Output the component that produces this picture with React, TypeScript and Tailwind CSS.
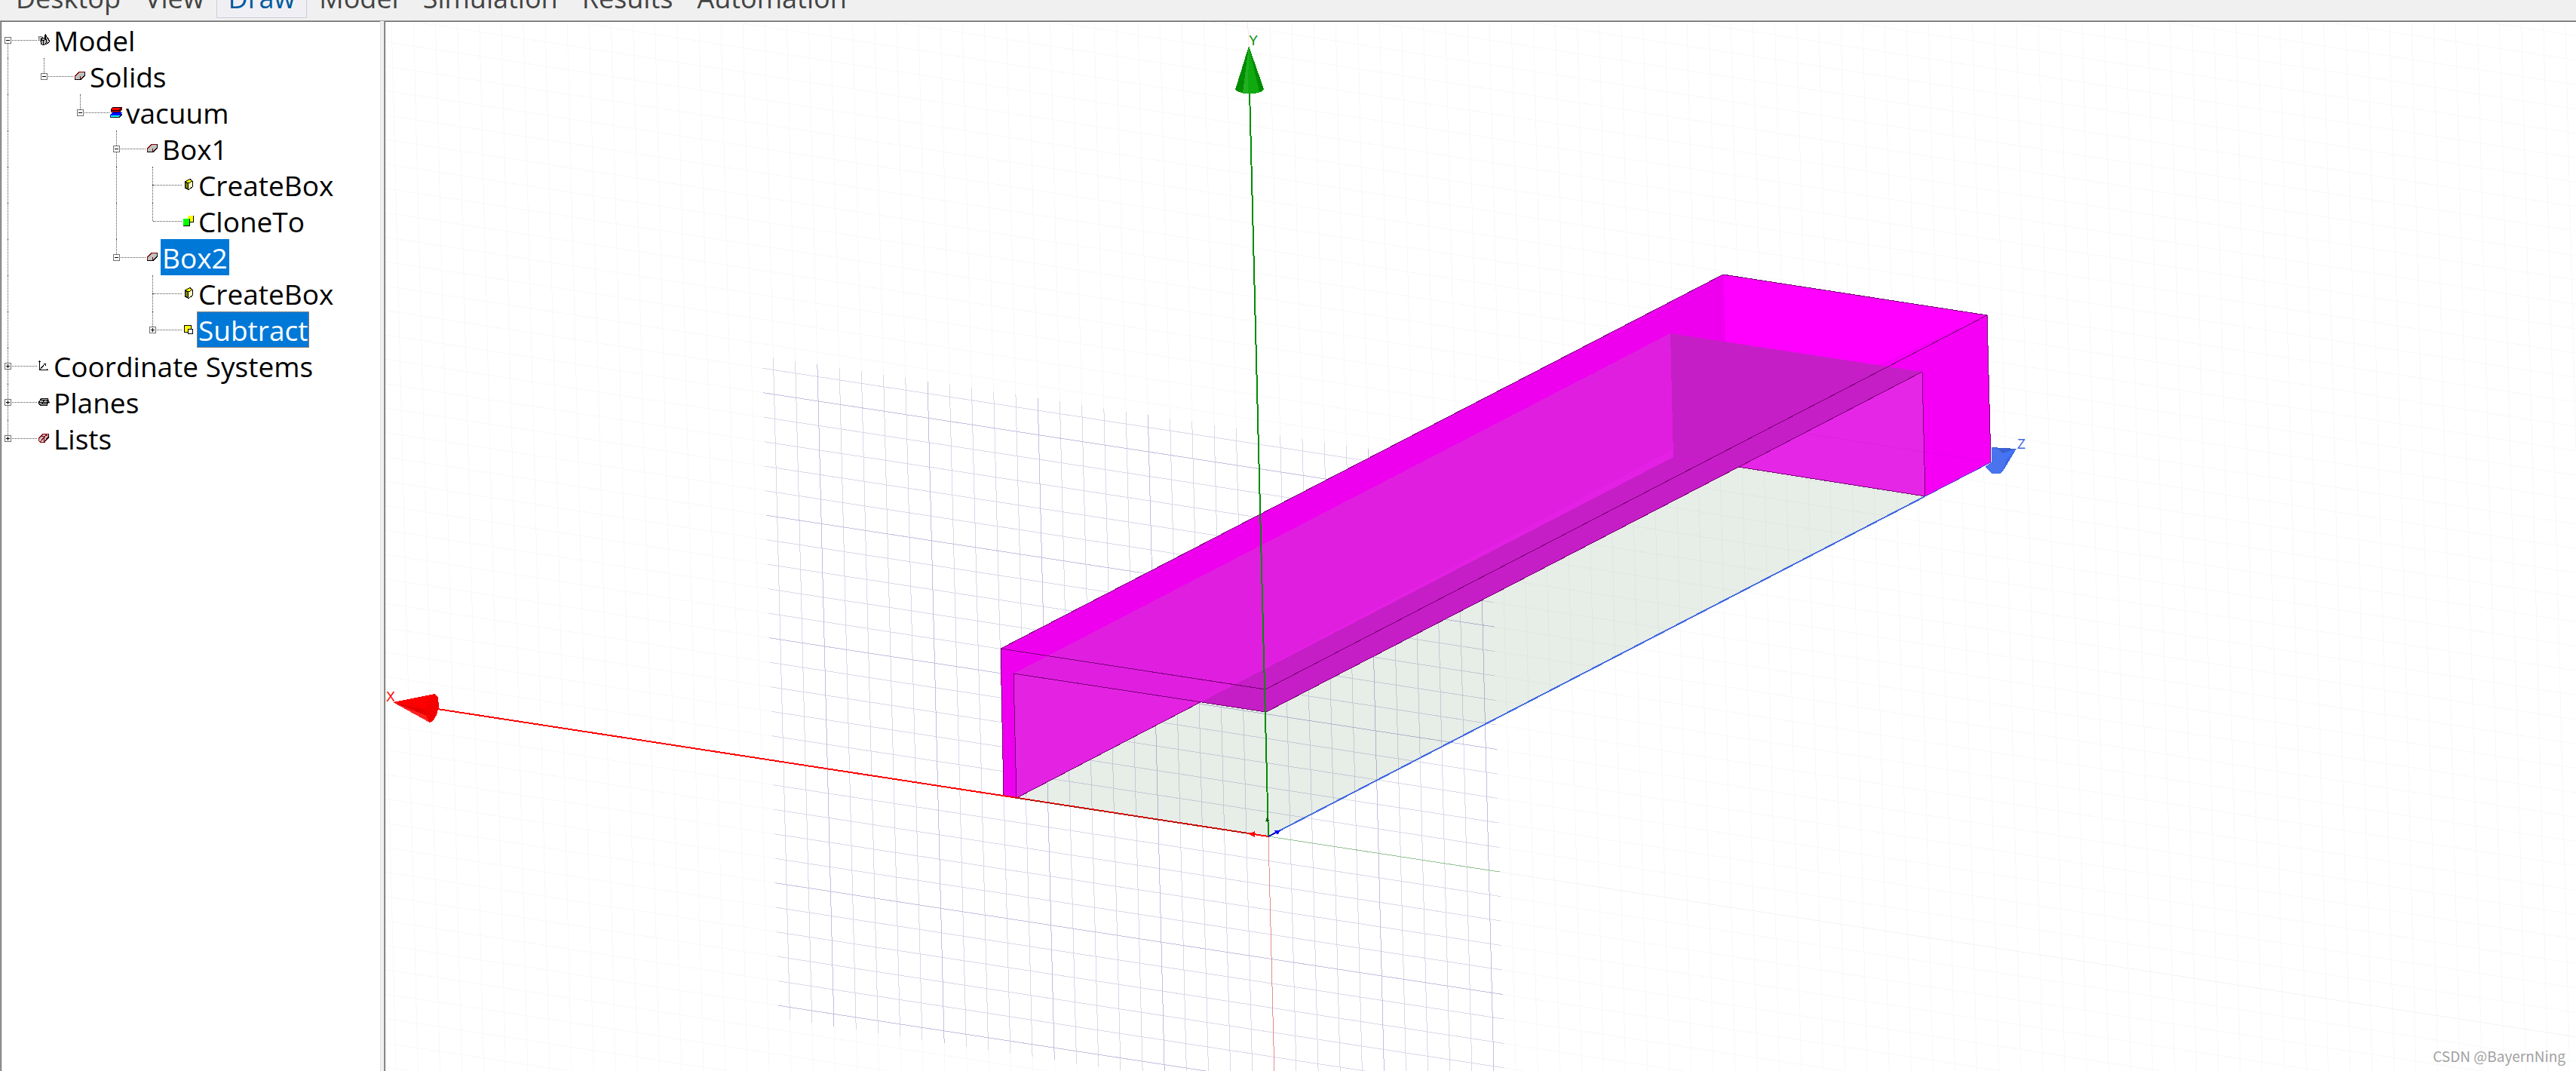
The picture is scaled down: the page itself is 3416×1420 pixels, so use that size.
import { useState } from "react";
import type { ReactNode } from "react";

/* ---------- icons ---------- */

const Icon = ({ children }: { children: ReactNode }) => (
  <svg
    viewBox="0 0 16 16"
    className="size-4 shrink-0"
    fill="none"
    shapeRendering="crispEdges"
    aria-hidden="true"
  >
    {children}
  </svg>
);

const ModelIcon = () => (
  <Icon>
    <path d="M1 3h5v4l-2 2H2L1 7z" fill="#c0c0c0" stroke="#404040" strokeDasharray="1 1" />
    <path d="M10 1l5 7v3l-3 2h-3z" fill="#c0c0c0" stroke="#000" />
    <path d="M10.500 0v8M12 4l3 5" stroke="#000" />
    <path d="M4 7l3-2 4 2v5l-3 3-4-2z" fill="#b8b8b8" stroke="#000" />
    <path d="M4 7l3 2 4-2M7.500 9v6" stroke="#000" />
  </Icon>
);

const SolidIcon = () => (
  <Icon>
    <path d="M1 8l6-6h8v5l-6 6H1z" fill="#c0c0c0" />
    <path d="M1.500 13V8L7 2.500h7" stroke="#800000" />
    <path d="M8.500 8v5M8 8h1" stroke="#800000" />
    <path d="M14.500 2v5L9 12.500H1" stroke="#000" />
  </Icon>
);

const MaterialIcon = () => (
  <Icon>
    <path d="M3 8h13l-2 6H0v-3z" fill="#00f" />
    <path d="M1 12h12v2H1z" fill="#0ff" />
    <path d="M0 14.500h12l4-4V7" stroke="#000" />
    <path d="M4 1h12v3l-3 4H1V5z" fill="#f00" />
    <path d="M3 1.500h13V4l-3 3.500H1M1 6V4l3-3M1 5.500h11l3-3" stroke="#000" />
  </Icon>
);

const CreateBoxIcon = () => (
  <Icon>
    <path d="M3 4l5 2v8l-5-2z" fill="#808000" />
    <path d="M8 6l5-3v8l-4 3H8z" fill="#ffffc0" />
    <path d="M3 4l4-3h4l2 2-5 3z" fill="#ff0" />
    <path d="M3.500 4v8l4 2H9l4-3V3l-3-2.500L3.500 4l4 2v8M8 6l5-3" stroke="#000" />
  </Icon>
);

const CloneIcon = () => (
  <Icon>
    <path d="M7 1h8v9H7z" fill="#ff0" />
    <path d="M14.500 1v8.500H9" stroke="#000" />
    <path d="M1 5h8v9H1z" fill="#0f0" />
    <path d="M9.500 5v9.500H1" stroke="#000" />
  </Icon>
);

const SubtractIcon = () => (
  <Icon>
    <path d="M2.500 2.500h9v9h-9z" fill="#ff0" stroke="#000" />
    <path d="M7.500 7.500h6v6h-6z" fill="#fff" stroke="#000" />
  </Icon>
);

const AxesIcon = () => (
  <Icon>
    <path d="M2.500 1v13M1 2.500h3M2 13.500h12M12.500 12v2M3 13l7-8M8 5.500h3M10.500 5v3" stroke="#000" />
  </Icon>
);

const PlanesIcon = () => (
  <Icon>
    <path d="M5 3h9l2 5-3 4H3L0 8z" fill="#c0c0c0" />
    <path d="M5 3.500h9M3 5.500h10M1 8.500h15M4 10.500h9M3 12.500h10M5 3L1 9l3 4M14 3l-2 7M15 6l-3 6M9 5l-3 5" stroke="#000" />
  </Icon>
);

const ListsIcon = () => (
  <Icon>
    <path d="M1 8l6-6h8v5l-6 7H3L1 12z" fill="#c0c0c0" />
    <path d="M1.500 12V8L7 2.500h7v5L9 13.500H4L1 11M3 13l9-10M8 14l6-8M5 5l4 1M8 2l5 3M8.500 8v4" stroke="#900010" />
    <path d="M14.500 3v4L10 12" stroke="#000" />
  </Icon>
);

/* ---------- tree ---------- */

type Node = {
  label: string;
  icon: ReactNode;
  guides: boolean[]; // one per ancestor column, true where its line runs on
  up?: boolean;
  down?: boolean;
  toggle?: "+" | "-";
  state?: "selected" | "focused";
};

const nodes: Node[] = [
  { label: "Model", icon: <ModelIcon />, guides: [], down: true, toggle: "-" },
  { label: "Solids", icon: <SolidIcon />, guides: [true], up: true, toggle: "-" },
  { label: "vacuum", icon: <MaterialIcon />, guides: [true, false], up: true, toggle: "-" },
  { label: "Box1", icon: <SolidIcon />, guides: [true, false, false], up: true, down: true, toggle: "-" },
  { label: "CreateBox", icon: <CreateBoxIcon />, guides: [true, false, false, true], up: true, down: true },
  { label: "CloneTo", icon: <CloneIcon />, guides: [true, false, false, true], up: true },
  { label: "Box2", icon: <SolidIcon />, guides: [true, false, false], up: true, toggle: "-", state: "selected" },
  { label: "CreateBox", icon: <CreateBoxIcon />, guides: [true, false, false, false], up: true, down: true },
  { label: "Subtract", icon: <SubtractIcon />, guides: [true, false, false, false], up: true, toggle: "+", state: "focused" },
  { label: "Coordinate Systems", icon: <AxesIcon />, guides: [], up: true, down: true, toggle: "+" },
  { label: "Planes", icon: <PlanesIcon />, guides: [], up: true, down: true, toggle: "+" },
  { label: "Lists", icon: <ListsIcon />, guides: [], up: true, toggle: "+" },
];

const Line = ({ on }: { on?: boolean }) => (
  <span className={`w-px flex-1 ${on ? "border-l border-dotted border-[#505050]" : ""}`} />
);

const labelStyles = {
  none: "border-transparent text-black",
  selected: "border-[#0078d7] bg-[#0078d7] text-white",
  focused: "border-dotted border-[#ff8728] bg-[#0078d7] text-white",
};

const TreeRow = ({ node }: { node: Node }) => (
  <li role="treeitem" aria-level={node.guides.length + 1} className="flex h-12 items-center">
    {node.guides.map((on, i) => (
      <span key={i} className="flex h-full w-12 shrink-0">
        <span className="ml-2 flex h-full flex-col">
          <Line on={on} />
        </span>
      </span>
    ))}
    <span className="ml-1 flex h-full w-[9px] shrink-0 flex-col items-center">
      <Line on={node.up} />
      {node.toggle && (
        <button
          aria-label={node.toggle === "+" ? "Expand" : "Collapse"}
          className="size-[9px] border border-[#707070] bg-white"
        >
          <svg viewBox="0 0 7 7" className="size-[7px]" shapeRendering="crispEdges">
            <path d={node.toggle === "+" ? "M1 3h5v1H1zM3 1h1v5H3z" : "M1 3h5v1H1z"} />
          </svg>
        </button>
      )}
      <Line on={node.down} />
    </span>
    <span
      className={`shrink-0 border-t border-dotted border-[#505050] ${
        node.toggle ? "ml-px mr-px w-[33px]" : "-ml-1 mr-px w-[38px]"
      }`}
    />
    {node.icon}
    <span
      className={`ml-[3px] h-12 border px-px text-[37px] leading-12 whitespace-nowrap ${
        labelStyles[node.state ?? "none"]
      }`}
    >
      {node.label}
    </span>
  </li>
);

/* ---------- 3D view ---------- */

const ORIGIN = { x: 1682, y: 1109 };

// n steps along the X axis, m steps up the Y axis
const at = (n: number, m: number) => [
  ORIGIN.x + n * 29.23 - m * 0.82,
  ORIGIN.y + n * 4.48 - m * 32.5,
];

const segment = (a: number[], b: number[]) => `M${a[0]} ${a[1]}L${b[0]} ${b[1]}`;

const range = (from: number, to: number) =>
  Array.from({ length: to - from + 1 }, (_, i) => from + i);

const faint = [
  ...range(-42, 64).map((n) => segment(at(n, -30), at(n, 50))),
  ...range(-24, 50).map((m) => segment(at(-42, m), at(64, m))),
].join("");

const lines = (major: boolean) =>
  [
    ...range(-22, 10)
      .filter((n) => n !== 0 && (n % 5 === 0) === major)
      .map((n) => segment(at(n, -10.5), at(n, 16.5))),
    ...range(-10, 16)
      .filter((m) => m !== 0 && (m % 5 === 0) === major)
      .map((m) => segment(at(-22.5, m), at(10.5, m))),
  ].join("");

const Grid = () => (
  <g fill="none">
    <path d={faint} stroke="#f8f8f8" />
    <path d={segment(at(0, 16.5), at(0, 50))} stroke="#ffe6ea" />
    <path d={segment(at(10.5, 0), at(64, 0))} stroke="#eff6ef" />
    <path d={lines(false)} stroke="#d9d9ea" />
    <path d={lines(true)} stroke="#c1c1de" />
    <path d={segment(at(0, 0), at(0, -10.5))} stroke="#e68c8e" />
    <path d={segment(at(0, 0), at(10.5, 0))} stroke="#94c094" />
  </g>
);

const Solid = () => (
  <g>
    <path d="M1682 1109L1331 1055L2290 560L2553 658Z" fill="#105010" fillOpacity="0.1" />
    {/* walls */}
    <path d="M1327 860L2285 364L2288 460L2215 450L1348 1058L1331 1055Z" fill="#ee00ee" />
    <path d="M2285 364L2635 418L2549 500L2288 460Z" fill="#ff00ff" />
    <path d="M2635 418L2640 613L2553 658L2549 500L2491 492V484Z" fill="#f500f5" />
    <path d="M1344 893L2215 442L2219 606L1592 931L1348 1058Z" fill="#e01ee0" />
    <path d="M1592 931L2219 596V606L1592 931Z" fill="#e420e4" />
    <path d="M1344 893L1592 931L1348 1058Z" fill="#e422e2" />
    <path d="M2215 442L2549 493L1679 944L1592 931L2219 606Z" fill="#c61ec6" />
    <path d="M2549 493L2553 658L2305 619Z" fill="#e626e6" />
    {/* hidden edges */}
    <g fill="none" strokeWidth="1">
      <path d="M2285 364L2288 453" stroke="#f400f4" />
      <path d="M2219 606L2305 619" stroke="#ce16ce" />
      <path d="M2395 575L2551 599" stroke="#e020e0" />
      <path d="M2551 599L2630 611" stroke="#ea00ea" />
    </g>
    <path
      d="M1331 1055L1327 860L2285 364L2635 418L2640 613L2553 658L2549 493L1679 944L1344 893L1348 1058L1592 931M1327 860L1678 914L2635 418M2305 619L2553 658"
      fill="none"
      stroke="#780078"
    />
  </g>
);

const Axes = () => (
  <g>
    {/* X */}
    <path d="M580 940L1682 1109" stroke="#ff0000" strokeWidth="2" />
    <path d="M1348 1058L1655 1105" stroke="#6e2a1c" strokeDasharray="10 3" />
    <path d="M521 931L576 920L581 925L582 937L579 948L574 956L570 958Z" fill="#ff0000" />
    <path d="M521 931L570 958L566 949Z" fill="#ff2020" />
    <path d="M521 931L566 949L564 941Z" fill="#e60000" />
    <path d="M576 920L581 925L582 937L579 948L574 956L570 958L565 950L563 940L567 929Z" fill="#f40000" />
    <path d="M1656 1106L1664 1102V1110Z" fill="#ff0000" />
    {/* Y */}
    <path d="M1657 120L1682 1109" stroke="#008c00" strokeWidth="2" />
    <path d="M1656 61L1638 119L1643 122L1650 124H1664L1672 122L1676 118Z" fill="#10aa10" />
    <path d="M1656 61L1638 119L1643 122L1648 123Z" fill="#008c00" />
    <path d="M1656 61L1648 123L1655 124Z" fill="#22b022" />
    <path d="M1656 61L1670 122L1676 118Z" fill="#008c00" />
    <path d="M1681 1082L1678 1089H1683Z" fill="#006400" />
    {/* Z */}
    <path d="M1682 1109L2553 658" stroke="#4169e1" strokeWidth="2" />
    <path d="M2553 658L2640 613" stroke="#5a3cd0" />
    <path d="M2641 593L2674 595L2657 623L2652 628H2642L2632 619L2641 613Z" fill="#4a74ee" />
    <path d="M2641 593L2674 595L2655 601L2649 595Z" fill="#3a60d0" />
    <path d="M2674 595L2655 601L2660 612Z" fill="#4472f6" />
    <path d="M2674 595L2660 611L2657 623Z" fill="#3c66e0" />
    <path d="M1682 1109L1694 1103" stroke="#0000c0" strokeWidth="2" />
    <path d="M1698 1101L1690 1101L1694 1107Z" fill="#0000ff" />
  </g>
);

const View3D = () => (
  <main className="relative min-w-0 flex-1 overflow-hidden border-l border-[#a0a0a0] bg-white">
    <svg
      viewBox="511 29 2905 1391"
      preserveAspectRatio="xMinYMin slice"
      className="absolute inset-0 size-full border-t border-l border-[#696969] font-['Liberation_Sans',sans-serif] text-[18px]"
      shapeRendering="crispEdges"
      role="img"
      aria-label="3D Modeler"
    >
      <Grid />
      <Solid />
      <Axes />
      <text x="512" y="930" fill="#ff0000">
        X
      </text>
      <text x="1656" y="60" fill="#008c00">
        Y
      </text>
      <text x="2675" y="595" fill="#4169e1">
        Z
      </text>
    </svg>
    <p className="absolute right-[14px] bottom-2 font-['Noto_Sans_CJK_SC',sans-serif] text-[19px] leading-6 text-[#a2a2a2]">
      CSDN @BayernNing
    </p>
  </main>
);

/* ---------- page ---------- */

const tabs = ["Desktop", "View", "Draw", "Model", "Simulation", "Results", "Automation"];

const App = () => {
  const [active, setActive] = useState("Draw");

  return (
    <div className="flex h-screen flex-col overflow-hidden bg-[#f0f0f0] font-['Open_Sans',sans-serif]">
      <nav className="flex h-[27px] shrink-0 items-end overflow-hidden pb-[3px] pl-[5px]">
        {tabs.map((tab) => (
          <button
            key={tab}
            onClick={() => setActive(tab)}
            className={`h-[52px] shrink-0 border px-[15px] text-[36px] leading-[50px] ${
              tab === active
                ? "border-[#ccccdc] bg-[#f0f0f4] text-[#005a9e]"
                : "border-transparent text-[#444444]"
            }`}
          >
            {tab}
          </button>
        ))}
      </nav>
      <div className="flex min-h-0 flex-1 border-t border-[#a0a0a0]">
        <aside className="mr-1 w-[505px] shrink-0 overflow-hidden border-r border-l border-r-[#e3e3e3] border-l-[#a0a0a0]">
          <ul role="tree" className="h-full border-t border-l border-[#696969] bg-white">
            {nodes.map((node, i) => (
              <TreeRow key={i} node={node} />
            ))}
          </ul>
        </aside>
        <View3D />
      </div>
    </div>
  );
};

export default App;
